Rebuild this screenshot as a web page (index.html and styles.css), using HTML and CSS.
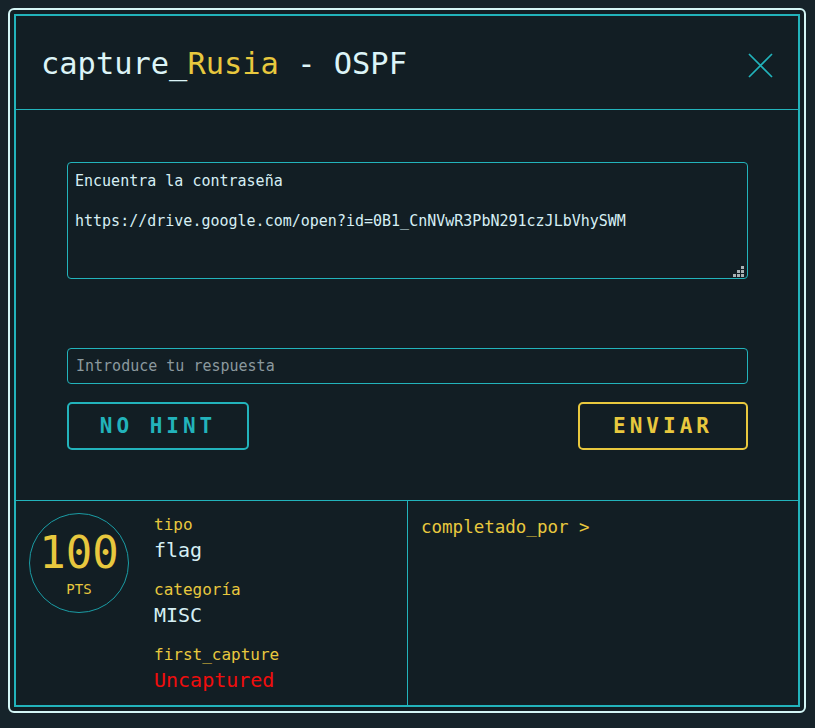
FILE: index.html
```html
<!DOCTYPE html>
<html lang="es">
<head>
<meta charset="utf-8">
<title>capture_Rusia - OSPF</title>
<link rel="stylesheet" href="styles.css">
</head>
<body>
<div class="modal">
  <div class="frame">
    <header class="head">
      <h1 class="title">capture_<span class="hl">Rusia</span> - OSPF</h1>
      <button class="close" aria-label="Cerrar">
        <svg width="25" height="25" viewBox="0 0 25 25"><path d="M1 1L24 24M24 1L1 24" stroke="#22b3bb" stroke-width="1.7" fill="none"/></svg>
      </button>
    </header>
    <section class="body">
      <div class="desc-wrap">
        <textarea class="desc" readonly>Encuentra la contraseña

https://drive.google.com/open?id=0B1_CnNVwR3PbN291czJLbVhySWM</textarea>
        <svg class="grip" width="11" height="11" viewBox="0 0 11 11">
          <rect x="8" y="0" width="3" height="3"/>
          <rect x="4" y="4" width="3" height="3"/>
          <rect x="8" y="4" width="3" height="3"/>
          <rect x="0" y="8" width="3" height="3"/>
          <rect x="4" y="8" width="3" height="3"/>
          <rect x="8" y="8" width="3" height="3"/>
        </svg>
      </div>
      <input class="answer" type="text" placeholder="Introduce tu respuesta">
      <div class="actions">
        <button class="btn hint">NO HINT</button>
        <button class="btn send">ENVIAR</button>
      </div>
    </section>
    <footer class="foot">
      <div class="info">
        <div class="score">
          <span class="pts-num">100</span>
          <span class="pts-lbl">PTS</span>
        </div>
        <dl class="meta">
          <div class="item">
            <dt class="label">tipo</dt>
            <dd class="value">flag</dd>
          </div>
          <div class="item">
            <dt class="label">categoría</dt>
            <dd class="value">MISC</dd>
          </div>
          <div class="item">
            <dt class="label">first_capture</dt>
            <dd class="value red">Uncaptured</dd>
          </div>
        </dl>
      </div>
      <div class="solvers">completado_por &gt;</div>
    </footer>
  </div>
</div>
</body>
</html>
```
FILE: styles.css
```css
html, body {
  background: #16232a;
}
body {
  margin: 8px;
  font-family: "DejaVu Sans Mono", "Liberation Mono", monospace;
}
.modal {
  width: 798px;
  height: 705px;
  box-sizing: border-box;
  border: 2px solid #d4f6f6;
  border-radius: 6px;
  padding: 4px;
  background: #121e24;
}
.frame {
  height: 100%;
  box-sizing: border-box;
  border: 2px solid #22b3bb;
  display: flex;
  flex-direction: column;
}
.head {
  height: 94px;
  flex-shrink: 0;
  box-sizing: border-box;
  border-bottom: 1px solid #22b3bb;
  display: flex;
  align-items: center;
  justify-content: space-between;
  padding: 2px 25px 0 25px;
}
.title {
  margin: 0;
  font-size: 30.4px;
  font-weight: normal;
  color: #dcf4f7;
  line-height: 36px;
}
.hl {
  color: #e8c83e;
}
.close {
  margin: 4px 0 0 0;
  padding: 0;
  border: none;
  background: transparent;
  width: 25px;
  height: 25px;
  display: flex;
}
.body {
  flex-shrink: 0;
  padding: 52px 50px 50px 51px;
  border-bottom: 1px solid #22b3bb;
}
.desc-wrap {
  position: relative;
}
.desc {
  display: block;
  width: 100%;
  height: 117px;
  box-sizing: border-box;
  margin: 0;
  padding: 8px 7px;
  border: 1px solid #22b3bb;
  border-radius: 4px;
  background: transparent;
  color: #d6eff4;
  font-family: "DejaVu Sans Mono", monospace;
  font-size: 15px;
  line-height: 20px;
  resize: none;
  outline: none;
}
.grip {
  position: absolute;
  right: 4px;
  bottom: 2px;
  fill: #a9b2b5;
}
.answer {
  display: block;
  margin-top: 69px;
  width: 100%;
  height: 36px;
  box-sizing: border-box;
  padding: 0 8px;
  border: 1px solid #22b3bb;
  border-radius: 4px;
  background: transparent;
  color: #d6eff4;
  font-family: "DejaVu Sans Mono", monospace;
  font-size: 15px;
  outline: none;
}
.answer::placeholder {
  color: #8b999e;
}
.actions {
  margin-top: 18px;
  display: flex;
  justify-content: space-between;
}
.btn {
  height: 48px;
  box-sizing: border-box;
  border: 2px solid;
  border-radius: 5px;
  background: transparent;
  font-family: "DejaVu Sans Mono", monospace;
  font-weight: bold;
  font-size: 21px;
  letter-spacing: 4px;
  padding: 0;
}
.hint {
  width: 182px;
  color: #22b3bb;
  border-color: #22b3bb;
}
.send {
  width: 170px;
  color: #e8c83e;
  border-color: #e8c83e;
}
.foot {
  flex: 1;
  display: flex;
}
.info {
  width: 392px;
  box-sizing: border-box;
  border-right: 1px solid #22b3bb;
  padding: 12px 0 0 13px;
  display: flex;
  gap: 25px;
}
.score {
  width: 100px;
  height: 100px;
  flex-shrink: 0;
  box-sizing: border-box;
  border: 1px solid #1a9ca4;
  border-radius: 50%;
  padding-top: 4px;
  display: flex;
  flex-direction: column;
  align-items: center;
  justify-content: center;
  color: #e8c83e;
}
.pts-num {
  font-size: 44px;
  line-height: 40px;
}
.pts-lbl {
  font-size: 14px;
  line-height: 16px;
  margin-top: 8px;
}
.meta {
  margin: 2px 0 0 0;
}
.item + .item {
  margin-top: 18px;
}
.label {
  font-size: 16px;
  line-height: 20px;
  color: #e8c83e;
}
.value {
  margin: 3px 0 0 0;
  font-size: 20px;
  line-height: 24px;
  color: #d6eff4;
}
.value.red {
  color: #f00d0d;
}
.solvers {
  padding: 15px 0 0 13px;
  font-size: 17.5px;
  line-height: 22px;
  color: #e8c83e;
}
```
